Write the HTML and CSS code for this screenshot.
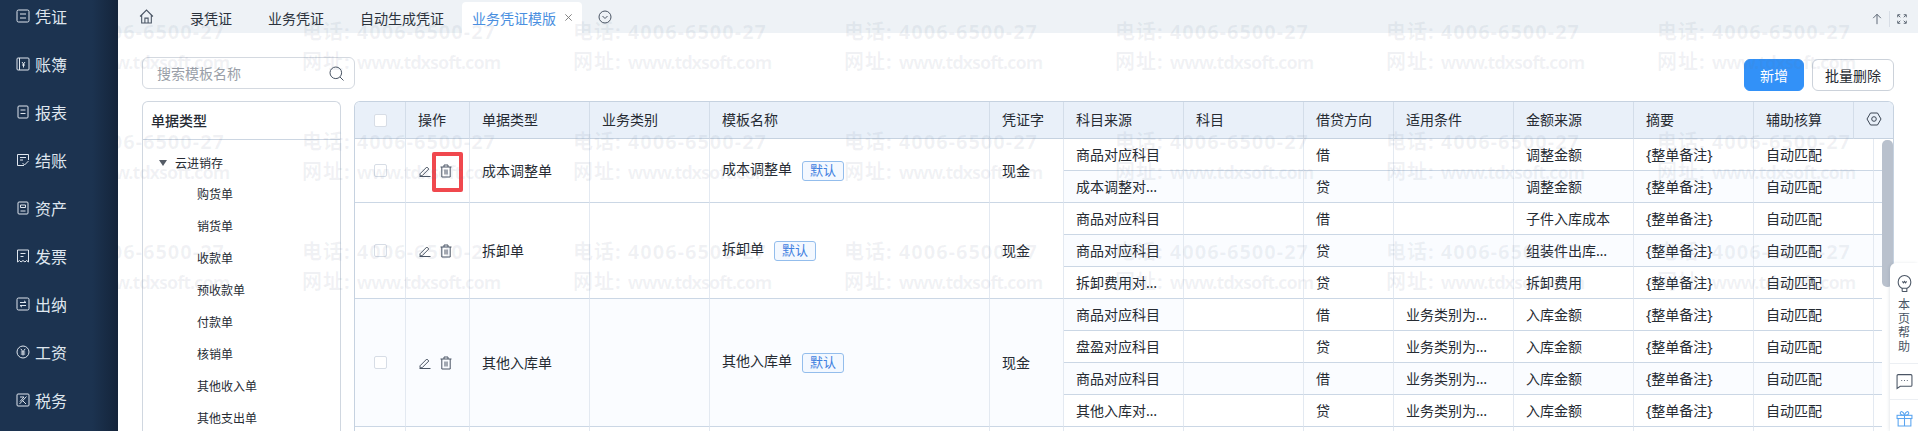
FILE: index.html
```html
<!DOCTYPE html>
<html lang="en">
<head>
  <meta charset="UTF-8" />
  <title>业务凭证模版</title>
  <link rel="stylesheet" href="styles.css">
</head>
<body>
  <aside class="sidebar">
    <ul class="menu">
      <li><svg viewBox="0 0 14 14"><rect x="1" y="1" width="12" height="12" rx="1.5"/><path d="M4 5h6M4 9h6"/></svg>凭证</li>
      <li><svg viewBox="0 0 14 14"><rect x="1" y="1" width="12" height="12" rx="1"/><path d="M3.500 1v12M6 5l1.500 2L9 5M7.500 7v3.500M6 8h3"/></svg>账簿</li>
      <li><svg viewBox="0 0 14 14"><rect x="2" y="1" width="10" height="12" rx="1"/><path d="M4.500 5h5M4.500 8.500h5"/></svg>报表</li>
      <li><svg viewBox="0 0 14 14"><path d="M12.500 7V1.500h-11v11H8"/><path d="M4 4.500h6M4 7h3M6.500 10l2 2 4-4"/></svg>结账</li>
      <li><svg viewBox="0 0 14 14"><rect x="2" y="1" width="10" height="12" rx="1"/><path d="M4.500 4h5v2.500h-5zM4.500 10h5"/></svg>资产</li>
      <li><svg viewBox="0 0 14 14"><path d="M1.500 1h11v12l-2-1.500-1.500 1.500-2-1.500-2 1.500-1.500-1.500-2 1.500z"/><path d="M4.500 4.500h5M4.500 7.500h3"/></svg>发票</li>
      <li><svg viewBox="0 0 14 14"><rect x="1" y="1" width="12" height="12" rx="1.500"/><path d="M4 5.500h6L8 3.800M10 8.500H4l2 1.700"/></svg>出纳</li>
      <li><svg viewBox="0 0 14 14"><circle cx="7" cy="7" r="6"/><path d="M4.800 3.800 7 6.800l2.200-3M4.800 7h4.400M4.800 9h4.400M7 7v3.500"/></svg>工资</li>
      <li><svg viewBox="0 0 14 14"><rect x="1" y="1" width="12" height="12" rx="1"/><path d="M4 4h4L4 8.500M10.500 3.500 3.500 11M6.500 7.500l3.500 3.500"/></svg>税务</li>
    </ul>
  </aside>

  <div class="main">
    <div class="tabbar">
      <svg class="tab-home" viewBox="0 0 14 14"><path d="M1 7 7 1l6 6M2.500 5.500V13h9V5.500M5.500 13V8.500h3V13"/></svg>
      <span class="tab">录凭证</span>
      <span class="tab">业务凭证</span>
      <span class="tab">自动生成凭证</span>
      <span class="tab tab-active">业务凭证模版<svg viewBox="0 0 10 10"><path d="M1.500 1.500l7 7M8.500 1.500l-7 7"/></svg></span>
      <svg class="tab-more" viewBox="0 0 14 14"><circle cx="7" cy="7" r="6"/><path d="M4.500 6 7 8.500 9.500 6"/></svg>
      <div class="tab-tools">
        <svg viewBox="0 0 14 14"><path d="M7 13V1.500M2.500 6 7 1.500 11.500 6"/></svg>
        <i class="tool-line"></i>
        <svg viewBox="0 0 14 14"><path d="M2 5V2h3M9 2h3v3M12 9v3H9M5 12H2V9M2.500 2.500 5 5M11.500 2.500 9 5M11.500 11.500 9 9M2.500 11.500 5 9"/></svg>
      </div>
    </div>

    <div class="content">
      <div class="toolbar">
        <label class="search">
          <input type="text" placeholder="搜索模板名称">
          <svg viewBox="0 0 15 15"><circle cx="6.800" cy="6.800" r="5.800"/><path d="M11 11l3.500 3.500"/></svg>
        </label>
        <div class="actions">
          <button class="btn btn-primary">新增</button>
          <button class="btn">批量删除</button>
        </div>
      </div>

      <div class="panels">
        <div class="tree">
          <div class="tree-title">单据类型</div>
          <div class="tree-root"><i class="caret"></i>云进销存</div>
          <ul class="tree-list">
            <li>购货单</li>
            <li>销货单</li>
            <li>收款单</li>
            <li>预收款单</li>
            <li>付款单</li>
            <li>核销单</li>
            <li>其他收入单</li>
            <li>其他支出单</li>
          </ul>
        </div>

        <div class="grid">
          <table class="grid-head">
            <colgroup>
              <col class="c-check"><col class="c-op"><col class="c-md"><col class="c-md"><col class="c-name"><col class="c-word"><col class="c-md"><col class="c-md"><col class="c-dir"><col class="c-md"><col class="c-md"><col class="c-md"><col class="c-aux"><col>
            </colgroup>
            <tr>
              <th><i class="check"></i></th><th>操作</th><th>单据类型</th><th>业务类别</th><th>模板名称</th><th>凭证字</th><th>科目来源</th><th>科目</th><th>借贷方向</th><th>适用条件</th><th>金额来源</th><th>摘要</th><th>辅助核算</th>
              <th class="gear"><svg viewBox="0 0 16 14"><path d="M4.500 1h7L15 7l-3.500 6h-7L1 7z"/><circle cx="8" cy="7" r="2.300"/></svg></th>
            </tr>
          </table>
          <div class="grid-scroll">
            <table class="grid-body">
              <colgroup>
                <col class="c-check"><col class="c-op"><col class="c-md"><col class="c-md"><col class="c-name"><col class="c-word"><col class="c-md"><col class="c-md"><col class="c-dir"><col class="c-md"><col class="c-md"><col class="c-md"><col class="c-md"><col class="c-pad">
              </colgroup>
              <tr>
                <td rowspan="2" class="center"><i class="check"></i></td>
                <td rowspan="2"><div class="ops"><svg viewBox="0 0 12 12"><path d="M1 8.800 7.800 2l2 2L3 10.800H1zM.5 11.500h11"/></svg><svg viewBox="0 0 12 14"><path d="M.5 3h11M4 3V1h4v2M1.800 3v10h8.400V3M5 5.500V10.500M7 5.500V10.500"/></svg></div></td>
                <td rowspan="2">成本调整单</td><td rowspan="2"></td>
                <td rowspan="2">成本调整单<span class="tag">默认</span></td>
                <td rowspan="2">现金</td>
                <td>商品对应科目</td><td></td><td>借</td><td></td><td>调整金额</td><td>{整单备注}</td><td>自动匹配</td><td class="pad"></td>
              </tr>
              <tr class="tint">
                <td>成本调整对应科目</td><td></td><td>贷</td><td></td><td>调整金额</td><td>{整单备注}</td><td>自动匹配</td><td class="pad"></td>
              </tr>
              <tr>
                <td rowspan="3" class="center"><i class="check"></i></td>
                <td rowspan="3"><div class="ops"><svg viewBox="0 0 12 12"><path d="M1 8.800 7.800 2l2 2L3 10.800H1zM.5 11.500h11"/></svg><svg viewBox="0 0 12 14"><path d="M.5 3h11M4 3V1h4v2M1.800 3v10h8.400V3M5 5.500V10.500M7 5.500V10.500"/></svg></div></td>
                <td rowspan="3">拆卸单</td><td rowspan="3"></td>
                <td rowspan="3">拆卸单<span class="tag">默认</span></td>
                <td rowspan="3">现金</td>
                <td>商品对应科目</td><td></td><td>借</td><td></td><td>子件入库成本</td><td>{整单备注}</td><td>自动匹配</td><td class="pad"></td>
              </tr>
              <tr class="tint">
                <td>商品对应科目</td><td></td><td>贷</td><td></td><td>组装件出库成本</td><td>{整单备注}</td><td>自动匹配</td><td class="pad"></td>
              </tr>
              <tr>
                <td>拆卸费用对应科目</td><td></td><td>贷</td><td></td><td>拆卸费用</td><td>{整单备注}</td><td>自动匹配</td><td class="pad"></td>
              </tr>
              <tr>
                <td rowspan="4" class="center tint-cell"><i class="check"></i></td>
                <td rowspan="4" class="tint-cell"><div class="ops"><svg viewBox="0 0 12 12"><path d="M1 8.800 7.800 2l2 2L3 10.800H1zM.5 11.500h11"/></svg><svg viewBox="0 0 12 14"><path d="M.5 3h11M4 3V1h4v2M1.800 3v10h8.400V3M5 5.500V10.500M7 5.500V10.500"/></svg></div></td>
                <td rowspan="4" class="tint-cell">其他入库单</td><td rowspan="4" class="tint-cell"></td>
                <td rowspan="4" class="tint-cell">其他入库单<span class="tag">默认</span></td>
                <td rowspan="4" class="tint-cell">现金</td>
                <td class="tint-cell">商品对应科目</td><td></td><td>借</td><td>业务类别为成本调整</td><td>入库金额</td><td>{整单备注}</td><td>自动匹配</td><td class="pad"></td>
              </tr>
              <tr>
                <td>盘盈对应科目</td><td></td><td>贷</td><td>业务类别为成本调整</td><td>入库金额</td><td>{整单备注}</td><td>自动匹配</td><td class="pad"></td>
              </tr>
              <tr class="tint">
                <td>商品对应科目</td><td></td><td>借</td><td>业务类别为成本调整</td><td>入库金额</td><td>{整单备注}</td><td>自动匹配</td><td class="pad"></td>
              </tr>
              <tr>
                <td>其他入库对应科目</td><td></td><td>贷</td><td>业务类别为成本调整</td><td>入库金额</td><td>{整单备注}</td><td>自动匹配</td><td class="pad"></td>
              </tr>
              <tr>
                <td></td><td></td><td></td><td></td><td></td><td></td><td></td><td></td><td></td><td></td><td></td><td></td><td></td><td class="pad"></td>
              </tr>
            </table>
            <i class="scroll-thumb"></i>
          </div>
          <i class="mark-box"></i>
        </div>
      </div>
    </div>

    <div class="watermark">
      <div class="wm">电话: 4006-6500-27<br>网址: <span>www.tdxsoft.com</span></div><div class="wm">电话: 4006-6500-27<br>网址: <span>www.tdxsoft.com</span></div><div class="wm">电话: 4006-6500-27<br>网址: <span>www.tdxsoft.com</span></div><div class="wm">电话: 4006-6500-27<br>网址: <span>www.tdxsoft.com</span></div><div class="wm">电话: 4006-6500-27<br>网址: <span>www.tdxsoft.com</span></div><div class="wm">电话: 4006-6500-27<br>网址: <span>www.tdxsoft.com</span></div><div class="wm">电话: 4006-6500-27<br>网址: <span>www.tdxsoft.com</span></div>
      <div class="wm">电话: 4006-6500-27<br>网址: <span>www.tdxsoft.com</span></div><div class="wm">电话: 4006-6500-27<br>网址: <span>www.tdxsoft.com</span></div><div class="wm">电话: 4006-6500-27<br>网址: <span>www.tdxsoft.com</span></div><div class="wm">电话: 4006-6500-27<br>网址: <span>www.tdxsoft.com</span></div><div class="wm">电话: 4006-6500-27<br>网址: <span>www.tdxsoft.com</span></div><div class="wm">电话: 4006-6500-27<br>网址: <span>www.tdxsoft.com</span></div><div class="wm">电话: 4006-6500-27<br>网址: <span>www.tdxsoft.com</span></div>
      <div class="wm">电话: 4006-6500-27<br>网址: <span>www.tdxsoft.com</span></div><div class="wm">电话: 4006-6500-27<br>网址: <span>www.tdxsoft.com</span></div><div class="wm">电话: 4006-6500-27<br>网址: <span>www.tdxsoft.com</span></div><div class="wm">电话: 4006-6500-27<br>网址: <span>www.tdxsoft.com</span></div><div class="wm">电话: 4006-6500-27<br>网址: <span>www.tdxsoft.com</span></div><div class="wm">电话: 4006-6500-27<br>网址: <span>www.tdxsoft.com</span></div><div class="wm">电话: 4006-6500-27<br>网址: <span>www.tdxsoft.com</span></div>
    </div>

    <div class="helper">
      <div class="helper-top">
        <svg viewBox="0 0 14 18"><path d="M4.500 13.500C2.500 12.300 1 10.500 1 7.500a6 6 0 0 1 12 0c0 3-1.500 4.800-3.500 6zM4.800 16.500h4.400V13.500M4.800 13.500v3M5 7l1 1.300L7 7l1 1.300L9 7"/></svg>
        <span>本页帮助</span>
      </div>
      <div class="helper-item"><svg viewBox="0 0 16 16"><path d="M2 1.500h12a1 1 0 0 1 1 1v9a1 1 0 0 1-1 1H4L1 14.500V2.500a1 1 0 0 1 1-1z"/><path d="M5 7h.8M7.600 7h.8M10.200 7h.8"/></svg></div>
      <div class="helper-item gift"><svg viewBox="0 0 16 16"><rect x="1" y="5" width="14" height="3"/><path d="M2 8v7h12V8M8 5v10M8 5C6 5 4 4.500 4 2.800 4 .8 7 1 8 5zM8 5c2 0 4-.5 4-2.200C12 .8 9 1 8 5z"/></svg></div>
    </div>
  </div>
</body>
</html>
```

FILE: styles.css
```css
* { box-sizing: border-box; }
html, body { height: 100%; }
body {
  margin: 0;
  display: flex;
  height: 431px;
  overflow: hidden;
  font-family: "Noto Sans", "Noto Sans CJK SC", sans-serif;
  font-size: 14px;
  color: #262b33;
  background: #fff;
}
ul { list-style: none; margin: 0; padding: 0; }
svg { fill: none; stroke: currentColor; stroke-width: 1; display: block; }

.sidebar {
  flex: 0 0 118px;
  background: linear-gradient(90deg, #1c3350 78%, #14243a 100%);
  color: #dfe6ee;
  overflow: hidden;
}
.menu { margin-top: -8px; }
.menu li {
  height: 48px;
  display: flex;
  align-items: center;
  gap: 5px;
  padding-left: 16px;
  font-size: 16px;
}
.menu svg { width: 14px; height: 14px; }

.main {
  flex: 1;
  min-width: 0;
  position: relative;
  overflow: hidden;
}

.tabbar {
  height: 33px;
  background: #eef2f6;
  display: flex;
  align-items: flex-end;
  padding-left: 21px;
}
.tab-home { width: 15px; height: 15px; margin: 0 36px 9px 0; color: #4a5564; }
.tab {
  height: 31px;
  display: flex;
  align-items: center;
  margin-right: 36px;
  color: #2c333d;
}
.tab-active {
  margin: 0 0 0 -18px;
  padding: 0 8px 0 10px;
  width: 120px;
  background: #fff;
  color: #4a8fe0;
  border-radius: 4px 4px 0 0;
}
.tab-active svg { width: 9px; height: 9px; margin-left: 8px; color: #777; }
.tab-more { width: 14px; height: 14px; margin: 0 0 9px 16px; color: #4a5564; }
.tab-tools {
  margin: 0 10px 6px auto;
  display: flex;
  align-items: center;
  gap: 6px;
  color: #4a5564;
}
.tab-tools svg { width: 12px; height: 12px; }
.tool-line { width: 1px; height: 16px; background: #d8dee6; }

.content { padding: 24px 24px 0; position: relative; }
.toolbar {
  display: flex;
  justify-content: space-between;
  height: 34px;
  margin-bottom: 10px;
}
.search {
  width: 213px;
  height: 32px;
  border: 1px solid #d4d9e0;
  border-radius: 6px;
  display: flex;
  align-items: center;
  padding: 0 10px 0 12px;
  color: #4a5564;
}
.search input {
  flex: 1;
  min-width: 0;
  border: 0;
  outline: 0;
  font: inherit;
  color: #262b33;
  background: transparent;
}
.search input::placeholder { color: #9a9fa8; }
.search svg { width: 15px; height: 15px; }
.actions { display: flex; gap: 8px; padding-top: 2px; }
.btn {
  height: 32px;
  width: 82px;
  border: 1px solid #ccd2da;
  border-radius: 6px;
  background: #fff;
  color: #262b33;
  font: inherit;
  padding: 0;
}
.btn-primary { width: 60px; background: #3291f8; border-color: #3291f8; color: #fff; }

.panels { display: flex; gap: 13px; align-items: flex-start; }

.tree {
  flex: 0 0 199px;
  height: 340px;
  border: 1px solid #d0d7e0;
  border-bottom: 0;
  border-radius: 6px 6px 0 0;
}
.tree-title {
  height: 38px;
  line-height: 38px;
  padding-left: 8px;
  font-weight: 500;
  border-bottom: 1px solid #ccd6e2;
}
.tree-root {
  height: 46px;
  display: flex;
  align-items: center;
  padding-left: 16px;
  font-size: 12px;
}
.caret {
  width: 0;
  height: 0;
  border: 4px solid transparent;
  border-top: 6px solid #555c66;
  border-bottom: 0;
  margin-right: 8px;
}
.tree-list { margin-top: -7px; }
.tree-list li {
  height: 32px;
  line-height: 32px;
  padding-left: 54px;
  font-size: 12px;
}

.grid {
  flex: 0 0 1540px;
  position: relative;
  border: 1px solid #c6d2e0;
  border-bottom: 0;
  border-radius: 6px 6px 0 0;
  overflow: hidden;
  height: 340px;
}
table { border-collapse: separate; border-spacing: 0; table-layout: fixed; }
.grid-head { width: 1539px; background: #e9f0f9; }
.grid-head th {
  height: 37px;
  padding: 0 12px 2px;
  font-weight: 400;
  text-align: left;
  border-right: 1px solid #d3dde9;
  border-bottom: 1px solid #c6d2e0;
}
.grid-head th:first-child { padding: 0; }
.grid-head .gear { border-right: 0; padding: 0; color: #3c4654; }
.gear svg { width: 16px; height: 14px; margin: -2px auto 0; }

.c-check { width: 51px; }
.c-op { width: 64px; }
.c-md { width: 120px; }
.c-name { width: 280px; }
.c-word { width: 74px; }
.c-dir { width: 90px; }
.c-aux { width: 100px; }
.c-pad { width: 8px; }

.grid-scroll { position: relative; width: 1539px; }
.grid-body { width: 1527px; }
.grid-body td {
  height: 32px;
  padding: 0 12px 2px;
  border-right: 1px solid #e3e9f1;
  border-bottom: 1px solid #cbd7e5;
  white-space: nowrap;
  overflow: hidden;
  text-overflow: ellipsis;
}
.grid-body td.center { padding: 0; }
.grid-body td.pad { padding: 0; border-right: 0; }
.tint td, .grid-body td.tint-cell { background: #fafcff; }

.check {
  display: block;
  width: 13px;
  height: 13px;
  margin: 0 auto;
  background: #fff;
  border: 1px solid #d7dde6;
  border-radius: 2px;
}
.ops { display: flex; align-items: center; gap: 9px; padding: 2px 0 0 1px; color: #4a5564; }
.ops svg:first-child { width: 12px; height: 12px; }
.ops svg:last-child { width: 12px; height: 14px; }
.tag {
  display: inline-block;
  margin-left: 10px;
  width: 42px;
  height: 20px;
  line-height: 17px;
  text-align: center;
  font-size: 13px;
  color: #3f7fe0;
  background: #f3f8ff;
  border: 1px solid #93bdec;
  border-radius: 3px;
  vertical-align: middle;
}
.scroll-thumb {
  position: absolute;
  left: 1527px;
  top: 1px;
  width: 11px;
  height: 147px;
  border-radius: 5px;
  background: #b9c1cd;
}
.mark-box {
  position: absolute;
  left: 77px;
  top: 50px;
  width: 31px;
  height: 40px;
  border: 4px solid #f0484e;
  border-radius: 2px;
}

.watermark {
  position: absolute;
  left: -87px;
  top: 17px;
  display: grid;
  grid-template-columns: repeat(7, 271px);
  grid-auto-rows: 110px;
  font-size: 20px;
  font-weight: 700;
  line-height: 30px;
  letter-spacing: 1px;
  color: rgba(95, 115, 145, .09);
  white-space: nowrap;
  pointer-events: none;
}
.wm span { font-size: 18px; letter-spacing: -1px; }

.helper {
  position: absolute;
  right: 0;
  top: 263px;
  width: 28px;
  height: 168px;
  background: #fff;
  border-radius: 6px 0 0 0;
  box-shadow: -1px 0 3px rgba(60, 80, 110, .12);
  color: #4a5564;
}
.helper-top {
  height: 101px;
  display: flex;
  flex-direction: column;
  align-items: center;
  padding-top: 11px;
  border-bottom: 1px solid #eceff3;
}
.helper-top svg { width: 15px; height: 19px; margin-bottom: 5px; }
.helper-top span { width: 12px; font-size: 12px; line-height: 14px; }
.helper-item {
  height: 36px;
  display: flex;
  align-items: center;
  justify-content: center;
  border-bottom: 1px solid #eceff3;
}
.helper-item svg { width: 17px; height: 17px; }
.gift { color: #5aa5f0; border-bottom: 0; }
```
